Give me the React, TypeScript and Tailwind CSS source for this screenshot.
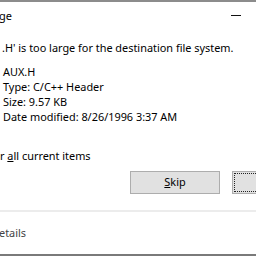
export default function App() {
  const font = { fontFamily: '"Noto Sans", "Open Sans", sans-serif' };
  return (
    <div className="w-[256px] h-[256px] overflow-hidden bg-white text-black flex flex-col" style={font}>
      <div className="h-[2px] bg-[#8c8c8c]" />
      {/* title bar */}
      <div className="h-[26px] flex items-center justify-between text-[11px] leading-none">
        <span className="-ml-[1px]">ge</span>
        <div className="w-[10px] h-[1px] bg-[#111] mr-[15px]" />
      </div>
      <div className="pl-[2px] pt-[12px] text-[10.9px] leading-[15px] whitespace-nowrap">
        .H' is too large for the destination file system.
      </div>
      <div className="pl-[3px] pt-[9px] text-[10.9px] leading-[15px] flex flex-col whitespace-nowrap">
        <span>AUX.H</span>
        <span>Type: C/C++ Header</span>
        <span>Size: 9.57 KB</span>
        <span>Date modified: 8/26/1996 3:37 AM</span>
      </div>
      <div className="pt-[24px] text-[10.9px] leading-[15px] whitespace-nowrap">
        r <span className="underline">a</span>ll current items
      </div>
      <div className="pt-[8px] flex gap-[12px] pl-[130px]">
        <div className="w-[90px] h-[23px] shrink-0 bg-[#e1e1e1] border border-[#adadad] flex items-center justify-center text-[10.9px]">
          <span><span className="underline">S</span>kip</span>
        </div>
        <div className="w-[40px] h-[23px] shrink-0 bg-[#e1e1e1] border border-[#adadad] p-[1px]">
          <div className="w-full h-full border border-dotted border-[#222]" />
        </div>
      </div>
      <div className="mt-[16px] h-[2px] bg-[#ececec]" />
      <div className="flex-1 flex items-center text-[10.9px] text-[#444]">
        <span className="-ml-[1px]">etails</span>
      </div>
      <div className="h-[2px] bg-[#7a7a7a]" />
    </div>
  );
}
